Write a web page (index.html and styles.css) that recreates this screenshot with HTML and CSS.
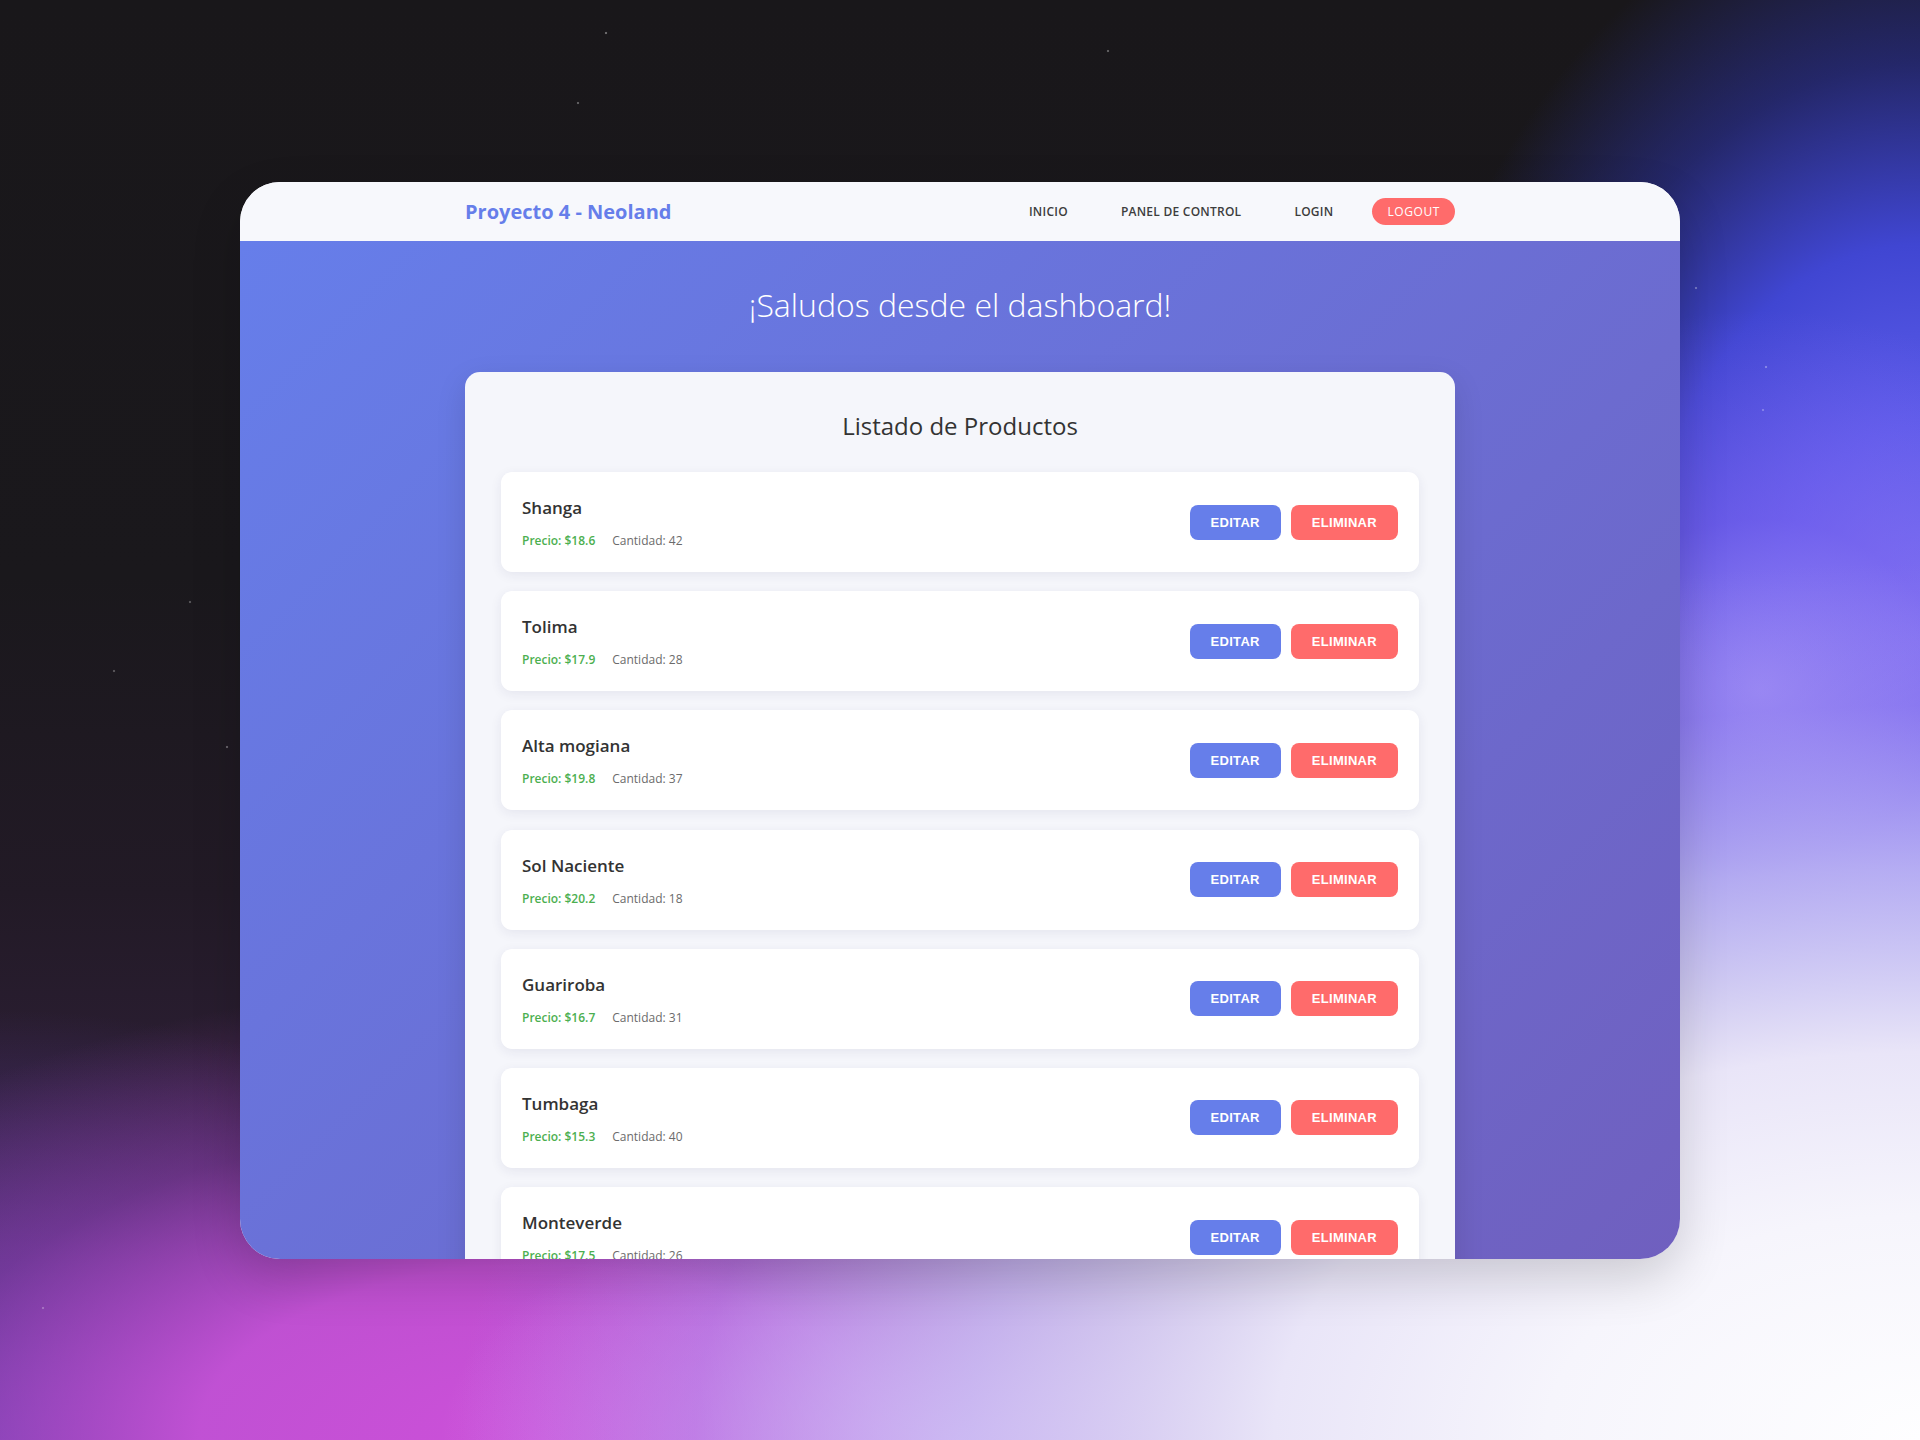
FILE: index.html
```html
<!DOCTYPE html>
<html lang="es">
<head>
<meta charset="utf-8">
<title>Proyecto 4 - Neoland</title>
<link rel="stylesheet" href="styles.css">
</head>
<body>
<div class="stage">
  <div class="window">
    <header class="nav">
      <div class="nav-inner">
        <a class="brand" href="#">Proyecto 4 - Neoland</a>
        <nav class="links">
          <a class="link" href="#">INICIO</a>
          <a class="link" href="#">PANEL DE CONTROL</a>
          <a class="link" href="#">LOGIN</a>
          <a class="link logout" href="#">LOGOUT</a>
        </nav>
      </div>
    </header>
    <main class="main">
      <h1 class="greet">¡Saludos desde el dashboard!</h1>
      <section class="panel">
        <h2 class="panel-title">Listado de Productos</h2>
        <ul class="list">
          <li class="item">
            <div class="info"><h3 class="name">Shanga</h3><p class="meta"><span class="price">Precio: $18.6</span><span class="qty">Cantidad: 42</span></p></div>
            <div class="actions"><button class="btn edit">EDITAR</button><button class="btn del">ELIMINAR</button></div>
          </li>
          <li class="item">
            <div class="info"><h3 class="name">Tolima</h3><p class="meta"><span class="price">Precio: $17.9</span><span class="qty">Cantidad: 28</span></p></div>
            <div class="actions"><button class="btn edit">EDITAR</button><button class="btn del">ELIMINAR</button></div>
          </li>
          <li class="item">
            <div class="info"><h3 class="name">Alta mogiana</h3><p class="meta"><span class="price">Precio: $19.8</span><span class="qty">Cantidad: 37</span></p></div>
            <div class="actions"><button class="btn edit">EDITAR</button><button class="btn del">ELIMINAR</button></div>
          </li>
          <li class="item">
            <div class="info"><h3 class="name">Sol Naciente</h3><p class="meta"><span class="price">Precio: $20.2</span><span class="qty">Cantidad: 18</span></p></div>
            <div class="actions"><button class="btn edit">EDITAR</button><button class="btn del">ELIMINAR</button></div>
          </li>
          <li class="item">
            <div class="info"><h3 class="name">Guariroba</h3><p class="meta"><span class="price">Precio: $16.7</span><span class="qty">Cantidad: 31</span></p></div>
            <div class="actions"><button class="btn edit">EDITAR</button><button class="btn del">ELIMINAR</button></div>
          </li>
          <li class="item">
            <div class="info"><h3 class="name">Tumbaga</h3><p class="meta"><span class="price">Precio: $15.3</span><span class="qty">Cantidad: 40</span></p></div>
            <div class="actions"><button class="btn edit">EDITAR</button><button class="btn del">ELIMINAR</button></div>
          </li>
          <li class="item">
            <div class="info"><h3 class="name">Monteverde</h3><p class="meta"><span class="price">Precio: $17.5</span><span class="qty">Cantidad: 26</span></p></div>
            <div class="actions"><button class="btn edit">EDITAR</button><button class="btn del">ELIMINAR</button></div>
          </li>
        </ul>
      </section>
    </main>
  </div>
</div>
</body>
</html>
```
FILE: styles.css
```css
* { box-sizing: border-box; }

html, body {
  margin: 0;
  padding: 0;
}

body {
  width: 1920px;
  height: 1440px;
  overflow: hidden;
  font-family: "Open Sans", "Noto Sans", sans-serif;
  background:
    radial-gradient(circle at 606px 33px, rgba(255,255,255,0.35) 0 1px, transparent 1.6px),
    radial-gradient(circle at 1108px 51px, rgba(255,255,255,0.3) 0 1px, transparent 1.6px),
    radial-gradient(circle at 578px 103px, rgba(255,255,255,0.3) 0 1px, transparent 1.6px),
    radial-gradient(circle at 1696px 288px, rgba(255,255,255,0.3) 0 1px, transparent 1.6px),
    radial-gradient(circle at 1766px 367px, rgba(255,255,255,0.3) 0 1px, transparent 1.6px),
    radial-gradient(circle at 1763px 410px, rgba(255,255,255,0.25) 0 1px, transparent 1.6px),
    radial-gradient(circle at 227px 747px, rgba(255,255,255,0.3) 0 1px, transparent 1.6px),
    radial-gradient(circle at 114px 671px, rgba(255,255,255,0.25) 0 1px, transparent 1.6px),
    radial-gradient(circle at 190px 602px, rgba(255,255,255,0.25) 0 1px, transparent 1.6px),
    radial-gradient(circle at 43px 1308px, rgba(255,255,255,0.25) 0 1px, transparent 1.6px),
    radial-gradient(ellipse 1700px 1020px at 1920px 1440px, #fefeff 0%, #f6f5fc 22%, #e9e5f8 38%, rgba(200,192,245,0.8) 56%, rgba(160,140,240,0.35) 72%, rgba(150,130,240,0) 86%),
    radial-gradient(ellipse 520px 260px at 960px 1440px, rgba(228,178,242,0.85) 0%, rgba(220,160,238,0.5) 50%, rgba(210,150,235,0) 100%),
    radial-gradient(ellipse 420px 380px at 1760px 690px, rgba(160,140,246,0.85) 0%, rgba(130,100,240,0.5) 45%, rgba(110,80,235,0) 100%),
    radial-gradient(ellipse 900px 460px at 540px 1440px, #cd50da 0%, rgba(204,84,220,0.9) 38%, rgba(180,70,205,0.35) 70%, rgba(160,60,190,0) 100%),
    radial-gradient(ellipse 540px 760px at 1920px 640px, #7c78f2 0%, #5c5cea 28%, #4046d2 52%, rgba(45,52,170,0.55) 76%, rgba(30,32,70,0) 100%),
    radial-gradient(ellipse 620px 430px at 0px 1440px, #5a3c9e 0%, rgba(90,56,150,0.65) 45%, rgba(60,30,80,0) 100%),
    linear-gradient(180deg, #19171a 0%, #1a181c 40%, #221a26 62%, #30203a 82%, #40265a 100%);
}

.stage {
  display: flex;
  justify-content: center;
  padding-top: 182px;
}

.window {
  width: 1440px;
  height: 1077px;
  border-radius: 40px;
  overflow: hidden;
  display: flex;
  flex-direction: column;
  background: #f7f8fc;
  box-shadow: 0 20px 50px rgba(0, 0, 0, 0.16);
}

/* NAV */
.nav {
  height: 59px;
  flex: 0 0 59px;
  background: #f7f8fc;
  display: flex;
  align-items: center;
  justify-content: center;
}

.nav-inner {
  width: 990px;
  display: flex;
  align-items: center;
  justify-content: space-between;
}

.brand {
  font-size: 20px;
  font-weight: 700;
  color: #667eea;
  text-decoration: none;
}

.links {
  display: flex;
  align-items: center;
  gap: 25px;
}

.link {
  display: block;
  height: 27px;
  line-height: 27px;
  padding: 0 14px;
  font-size: 12px;
  font-weight: 600;
  letter-spacing: 0.25px;
  color: #3d3d3d;
  text-decoration: none;
  border-radius: 14px;
}

.logout {
  padding: 0 15px;
  background: #ff6b6b;
  color: #ffffff;
  font-weight: 500;
  letter-spacing: 0.6px;
}

/* MAIN */
.main {
  flex: 1 1 auto;
  padding-top: 45px;
  background: linear-gradient(135deg, #667eea 0%, #764ba2 100%);
  background-size: 100% 2660px;
  background-repeat: no-repeat;
  display: flex;
  flex-direction: column;
  align-items: center;
}

.greet {
  margin: 0 0 48px;
  font-size: 32px;
  line-height: 38px;
  font-weight: 300;
  color: #ffffff;
  text-align: center;
}

.panel {
  width: 990px;
  flex: 0 0 auto;
  background: #f5f6fb;
  border-radius: 15px;
  padding: 39px 36px 36px;
  box-shadow: 0 10px 30px rgba(0, 0, 0, 0.12);
}

.panel-title {
  margin: 0 0 31px;
  font-size: 24px;
  line-height: 30px;
  font-weight: 500;
  color: #333333;
  text-align: center;
}

.list {
  list-style: none;
  margin: 0;
  padding: 0;
  display: flex;
  flex-direction: column;
  gap: 19.2px;
}

.item {
  height: 100px;
  background: #ffffff;
  border-radius: 11px;
  padding: 0 21px;
  display: flex;
  align-items: center;
  justify-content: space-between;
  box-shadow: 0 3px 12px rgba(40, 40, 90, 0.08);
}

.info {
  padding-top: 2px;
}

.name {
  margin: 0 0 12px;
  font-size: 17px;
  line-height: 24px;
  font-weight: 600;
  color: #333333;
}

.meta {
  margin: 0;
  font-size: 12px;
  line-height: 18px;
  display: flex;
  gap: 17px;
}

.price {
  color: #4caf50;
  font-weight: 600;
}

.qty {
  color: #6b6b6b;
}

.actions {
  display: flex;
  gap: 10px;
}

.btn {
  border: 0;
  border-radius: 8px;
  padding: 10px 21px;
  font-family: "Liberation Sans", Arial, sans-serif;
  font-size: 13px;
  line-height: 15px;
  font-weight: 700;
  letter-spacing: 0.3px;
  color: #ffffff;
  cursor: pointer;
}

.edit { background: #667eea; }
.del { background: #ff6b6b; }
```
